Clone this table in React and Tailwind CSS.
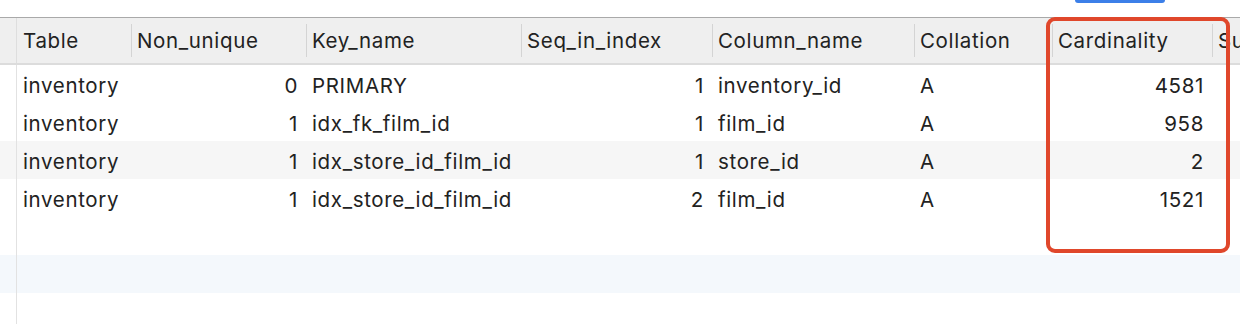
import React from 'react';

const cols = [
  { key: 'table', label: 'Table', w: 'w-[114px]' },
  { key: 'nonUnique', label: 'Non_unique', w: 'w-[175px]', right: true },
  { key: 'keyName', label: 'Key_name', w: 'w-[215px]' },
  { key: 'seq', label: 'Seq_in_index', w: 'w-[191px]', right: true },
  { key: 'column', label: 'Column_name', w: 'w-[202px]' },
  { key: 'collation', label: 'Collation', w: 'w-[138px]' },
  { key: 'cardinality', label: 'Cardinality', w: 'w-[160px]', right: true },
  { key: 'sub', label: 'Sub_part', w: 'w-[120px]' },
];

const rows = [
  { table: 'inventory', nonUnique: '0', keyName: 'PRIMARY', seq: '1', column: 'inventory_id', collation: 'A', cardinality: '4581', sub: '' },
  { table: 'inventory', nonUnique: '1', keyName: 'idx_fk_film_id', seq: '1', column: 'film_id', collation: 'A', cardinality: '958', sub: '' },
  { table: 'inventory', nonUnique: '1', keyName: 'idx_store_id_film_id', seq: '1', column: 'store_id', collation: 'A', cardinality: '2', sub: '' },
  { table: 'inventory', nonUnique: '1', keyName: 'idx_store_id_film_id', seq: '2', column: 'film_id', collation: 'A', cardinality: '1521', sub: '' },
  null,
  null,
];

const rowBg = ['bg-white', 'bg-white', 'bg-[#f6f6f6]', 'bg-white', 'bg-white', 'bg-[#f4f8fc]'];

export default function App() {
  return (
    <div className="relative w-[1240px] h-[324px] overflow-hidden bg-white text-[#222] font-['Inter',sans-serif] text-[20.5px] tracking-[0.65px]">
      {/* toolbar edge */}
      <div className="h-[17px] flex">
        <div className="ml-[1075px] w-[90px] h-[3px] rounded-b-[5px] bg-[#3c7fe8]" />
      </div>

      {/* header */}
      <div className="flex h-[48px] bg-[#efefef] border-t border-[#a9a9a9] border-b-2 border-b-[#dcdcdc] whitespace-nowrap">
        <div className="w-[17px] shrink-0 border-r border-[#dedede]" />
        {cols.map((c, i) => (
          <div key={c.key} className={`${c.w} shrink-0 flex items-center relative pl-[6px] pt-[2px]`}>
            {i > 0 && <div className="absolute left-0 top-[6px] bottom-[6px] w-px bg-[#d4d4d4]" />}
            {c.label}
          </div>
        ))}
      </div>

      {/* body */}
      <div className="flex flex-col">
        {rows.map((r, idx) => (
          <div key={idx} className={`flex h-[38px] whitespace-nowrap ${rowBg[idx]}`}>
            <div className="w-[17px] shrink-0 border-r border-[#e2e2e2]" />
            {cols.map((c) => (
              <div
                key={c.key}
                className={`${c.w} shrink-0 flex items-center pt-[5px] ${c.right ? 'justify-end pr-[8px]' : 'pl-[6px]'}`}
              >
                {r ? r[c.key] : ''}
              </div>
            ))}
          </div>
        ))}
        <div className="flex h-[40px]">
          <div className="w-[17px] shrink-0 border-r border-[#e2e2e2]" />
        </div>
      </div>

      {/* annotation */}
      <div className="absolute left-[1046px] top-[17px] w-[184px] h-[236px] border-4 border-[#e0472b] rounded-[9px]" />
    </div>
  );
}
